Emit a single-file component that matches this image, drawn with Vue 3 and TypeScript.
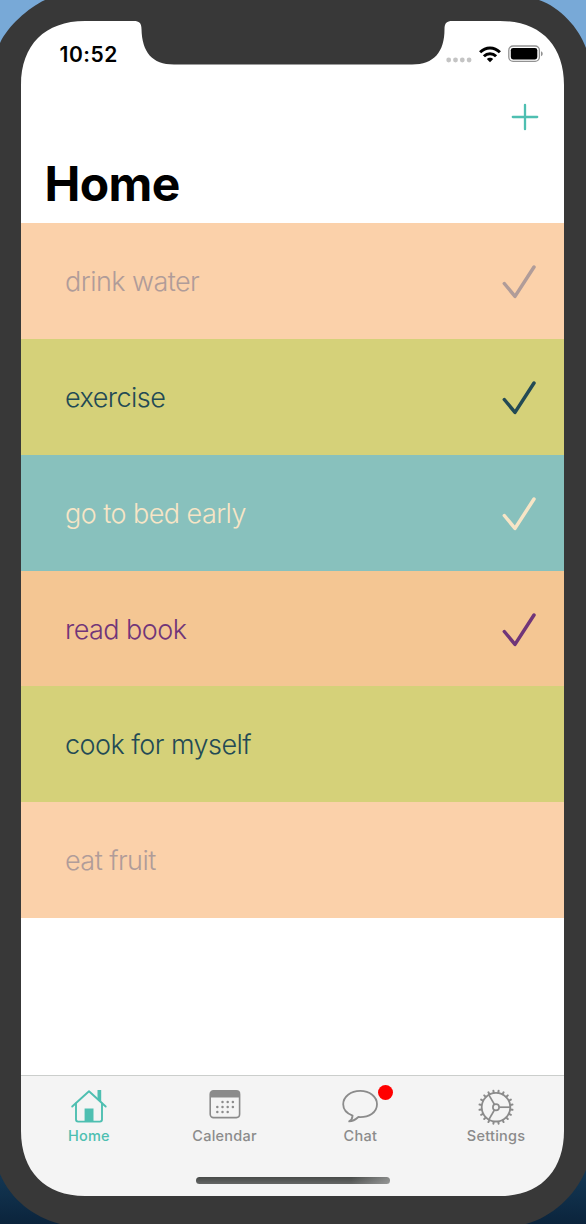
<script setup lang="ts">
interface Habit {
  name: string
  tone: 'peach' | 'lime' | 'teal' | 'orange'
  done: boolean
}

const habits: Habit[] = [
  { name: 'drink water', tone: 'peach', done: true },
  { name: 'exercise', tone: 'lime', done: true },
  { name: 'go to bed early', tone: 'teal', done: true },
  { name: 'read book', tone: 'orange', done: true },
  { name: 'cook for myself', tone: 'lime', done: false },
  { name: 'eat fruit', tone: 'peach', done: false },
]

const teeth: number[] = Array.from({ length: 20 }, (_, i) => i * 18 + 9)
const spokes: number[] = [0, 120, 240]
const dates: [number, number][] = [
  [13.2, 12], [18.4, 12], [23.6, 12],
  [8, 17], [13.2, 17], [18.4, 17], [23.6, 17],
  [8, 22.1], [13.2, 22.1], [18.4, 22.1],
]
</script>

<template>
  <div class="desktop">
    <div class="screen">
      <header class="status">
        <span class="time">10:52</span>
        <div class="indicators">
          <svg class="signal" width="26" height="6" viewBox="0 0 26 6">
            <circle v-for="n in 4" :key="n" :cx="n * 6.8 - 4.1" cy="3" r="2.4" fill="#c4c4c4" />
          </svg>
          <svg class="wifi" width="22" height="17" viewBox="0 0 22 17">
            <g fill="none" stroke="#000" stroke-width="3">
              <path d="M1.1 6.2C6.8.5 15.2.5 20.9 6.2" />
              <path d="M4.9 10.2C8.3 6.8 13.7 6.8 17.1 10.2" />
            </g>
            <path d="M11 16.3 7.8 13C9.5 11.2 12.5 11.2 14.2 13Z" />
          </svg>
          <svg class="battery" width="35" height="18" viewBox="0 0 35 18">
            <rect x=".8" y="1" width="30.6" height="15.4" rx="4.3" fill="#fff" stroke="#929292" stroke-width="1.3" />
            <rect x="2.8" y="3" width="26.5" height="11.4" rx="2.3" />
            <path d="M33 6.2C35.3 7.2 35.3 10.2 33 11.2Z" fill="#929292" />
          </svg>
        </div>
      </header>

      <div class="nav">
        <svg width="28" height="28" viewBox="0 0 28 28">
          <path d="M14 1.8V26.2M1.8 14H26.2" stroke="#4ebfb1" stroke-width="2.3" stroke-linecap="round" />
        </svg>
      </div>
      <h1 class="title">Home</h1>

      <main class="habits">
        <div v-for="habit in habits" :key="habit.name" class="habit" :class="habit.tone">
          <span class="name">{{ habit.name }}</span>
          <svg v-if="habit.done" class="check" width="36" height="36" viewBox="0 0 36 36">
            <path d="M3.3 20.5 14 33.4 33 4" fill="none" stroke="currentColor" stroke-width="3.5" stroke-linecap="round" stroke-linejoin="round" />
          </svg>
        </div>
      </main>

      <footer class="tabbar">
        <nav class="tabs">
          <div class="tab active">
            <svg width="38" height="38" viewBox="0 0 38 38">
              <g fill="none" stroke="currentColor" stroke-width="1.9" stroke-linejoin="round" stroke-linecap="round">
                <path d="M2.2 19.5 19 4.2 35.7 19.5" />
                <path d="M6 16.5V32.5Q6 34.6 8.1 34.6H29.9Q32 34.6 32 32.5V16.5" />
              </g>
              <path d="M14.6 21.5H23.5V34.5H14.6ZM27.5 3H31.2V15.3L27.5 11.8Z" fill="currentColor" />
            </svg>
            <span>Home</span>
          </div>
          <div class="tab">
            <svg width="38" height="38" viewBox="0 0 38 38">
              <g transform="translate(3.3 3)">
                <rect x=".9" y=".9" width="29.4" height="26.7" rx="3.3" fill="none" stroke="currentColor" stroke-width="1.6" />
                <path d="M1 7.5V4Q1 1 4 1H27Q30 1 30 4V7.5Z" fill="currentColor" />
                <circle v-for="([x, y], i) in dates" :key="i" :cx="x" :cy="y" r="1.25" fill="currentColor" />
              </g>
            </svg>
            <span>Calendar</span>
          </div>
          <div class="tab">
            <svg width="38" height="38" viewBox="0 0 38 38">
              <path d="M8.2 34.4C10.7 33 11.4 31 11.6 28.6C5.6 26.3 2.2 22 2.2 17.2C2.2 9.7 9.7 3.9 19.2 3.9S36 9.7 36 17.2C36 25.5 28 30.6 17.4 30C14.8 32.4 11.5 34.4 8.2 34.4Z" fill="none" stroke="currentColor" stroke-width="1.8" stroke-linejoin="round" />
            </svg>
            <i class="badge"></i>
            <span>Chat</span>
          </div>
          <div class="tab">
            <svg width="38" height="38" viewBox="0 0 38 38">
              <g transform="translate(19 20.2)" fill="none" stroke="currentColor">
                <circle r="14.3" stroke-width="1.8" />
                <circle r="3.1" stroke-width="1.7" />
                <path v-for="a in spokes" :key="'s' + a" d="M3.2 0H14" stroke-width="1.7" :transform="`rotate(${a})`" />
                <path v-for="a in teeth" :key="'t' + a" d="M14.7 0H16.7" stroke-width="2" stroke-linecap="round" :transform="`rotate(${a})`" />
              </g>
            </svg>
            <span>Settings</span>
          </div>
        </nav>
        <div class="home-indicator"></div>
      </footer>
    </div>

    <svg class="frame" width="586" height="1224" viewBox="0 0 586 1224">
      <path
        fill="#383838"
        fill-rule="evenodd"
        d="M45 0H539C560 7 579 28 586 48V1170C575 1196 552 1217 526 1224H60C34 1217 11 1200 0 1174V43C8 26 28 8 45 0Z
           M21 85V1131C21 1171 45 1196 85 1196H500C540 1196 564 1171 564 1131V85C564 45 540 21 500 21H452C447 21 444.5 23 444.5 29C444.5 52 434 64.5 412 64.5H174C152 64.5 142 52 141.5 29C141.5 23 139 21 134 21H85C45 21 21 45 21 85Z"
      />
    </svg>
  </div>
</template>

<style>
body {
  margin: 0;
}
</style>

<style scoped>
.desktop {
  position: relative;
  box-sizing: border-box;
  width: 586px;
  height: 1224px;
  padding: 21px 22px 28px 21px;
  overflow: hidden;
  background: linear-gradient(#78a9d7 0, #78a9d7 60px, #17405f 1150px, #0b243c 1224px);
  font-family: Inter, "Liberation Sans", sans-serif;
}

.frame {
  position: absolute;
  inset: 0;
  pointer-events: none;
}

.screen {
  display: flex;
  flex-direction: column;
  height: 1175px;
  background: #fff;
}

.status {
  display: flex;
  justify-content: space-between;
  align-items: center;
  height: 66px;
  padding: 0 21px 0 38.5px;
}

.time {
  color: #000;
  font-size: 21px;
  font-weight: 600;
  letter-spacing: 0.5px;
}

.indicators {
  display: flex;
  align-items: center;
}

.signal {
  margin: 11px 7px 0 0;
}

.wifi {
  margin-right: 7px;
}

.nav {
  display: flex;
  justify-content: flex-end;
  align-items: center;
  height: 59px;
  padding-right: 25px;
}

.title {
  height: 77.4px;
  margin: 0;
  padding-left: 23.5px;
  color: #000;
  font-size: 48px;
  font-weight: 700;
  line-height: 76px;
  letter-spacing: -0.6px;
}

.habits {
  display: grid;
  grid-template-rows: repeat(6, 115.78px);
}

.habit {
  display: flex;
  align-items: center;
  justify-content: space-between;
  padding: 0 27px 0 44px;
}

.name {
  padding-top: 1px;
  font-size: 27px;
  font-weight: 300;
  letter-spacing: -0.55px;
}

.peach {
  background: #fbd1aa;
  color: #b09c99;
}

.lime {
  background: #d5d179;
  color: #234a55;
}

.teal {
  background: #88c1bd;
  color: #f7e5c6;
}

.orange {
  background: #f4c693;
  color: #703579;
}

.tabbar {
  display: flex;
  flex-direction: column;
  align-items: center;
  box-sizing: border-box;
  height: 121px;
  margin-top: auto;
  padding-top: 11px;
  border-top: 1px solid #cbcecc;
  background: #f4f4f4;
}

.tabs {
  display: grid;
  grid-template-columns: repeat(4, 1fr);
  width: 100%;
}

.tab {
  position: relative;
  display: flex;
  flex-direction: column;
  align-items: center;
  color: #8b8b8b;
  font-size: 14.5px;
  font-weight: 500;
  line-height: 20px;
  letter-spacing: 0.25px;
}

.tab.active {
  color: #4ebfb1;
}

.tab span {
  margin-top: 1px;
}

.badge {
  position: absolute;
  top: -2px;
  left: 85px;
  width: 15px;
  height: 15px;
  border-radius: 50%;
  background: #f00;
}

.home-indicator {
  width: 194px;
  height: 7px;
  margin-top: 31px;
  border-radius: 4px;
  background: linear-gradient(90deg, transparent 80%, rgba(200, 200, 200, 0.5)), linear-gradient(#474a48, #646665);
}
</style>
